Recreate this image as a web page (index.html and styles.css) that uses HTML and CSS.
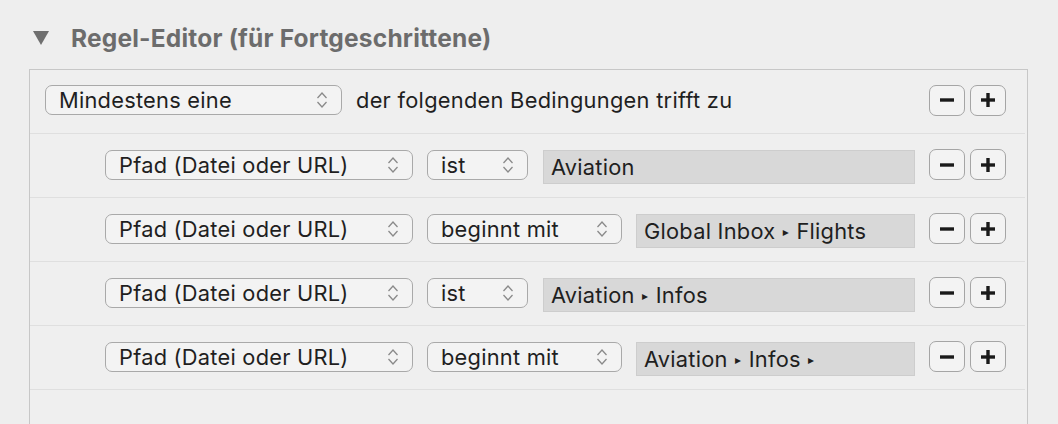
FILE: index.html
```html
<!DOCTYPE html>
<html lang="de">
<head>
<meta charset="utf-8">
<title>Regel-Editor</title>
<link rel="stylesheet" href="styles.css">
</head>
<body>
<div class="section-head">
  <svg class="disclosure" width="16" height="15" viewBox="0 0 16 15"><polygon points="0,1 16,1 8,15" fill="#6f6f6f"/></svg>
  <span class="section-title">Regel-Editor (für Fortgeschrittene)</span>
</div>
<div class="editor">
  <div class="row row-top">
    <div class="popup w-any"><span>Mindestens eine</span><svg class="chev" width="12" height="18" viewBox="0 0 12 18"><polyline points="1.5,7 6,2 10.5,7" /><polyline points="1.5,11 6,16 10.5,11" /></svg></div>
    <span class="label">der folgenden Bedingungen trifft zu</span>
    <div class="spacer"></div>
    <div class="btns"><button class="pm"><svg width="16" height="16" viewBox="0 0 16 16"><rect x="1" y="6.3" width="14" height="3.4"/></svg></button><button class="pm"><svg width="16" height="16" viewBox="0 0 16 16"><rect x="1" y="6.3" width="14" height="3.4"/><rect x="6.3" y="1" width="3.4" height="14"/></svg></button></div>
  </div>
  <div class="row row-sub">
    <div class="popup w-key"><span>Pfad (Datei oder URL)</span><svg class="chev" width="12" height="18" viewBox="0 0 12 18"><polyline points="1.5,7 6,2 10.5,7" /><polyline points="1.5,11 6,16 10.5,11" /></svg></div>
    <div class="popup w-is"><span>ist</span><svg class="chev" width="12" height="18" viewBox="0 0 12 18"><polyline points="1.5,7 6,2 10.5,7" /><polyline points="1.5,11 6,16 10.5,11" /></svg></div>
    <div class="field">Aviation</div>
    <div class="btns"><button class="pm"><svg width="16" height="16" viewBox="0 0 16 16"><rect x="1" y="6.3" width="14" height="3.4"/></svg></button><button class="pm"><svg width="16" height="16" viewBox="0 0 16 16"><rect x="1" y="6.3" width="14" height="3.4"/><rect x="6.3" y="1" width="3.4" height="14"/></svg></button></div>
  </div>
  <div class="row row-sub">
    <div class="popup w-key"><span>Pfad (Datei oder URL)</span><svg class="chev" width="12" height="18" viewBox="0 0 12 18"><polyline points="1.5,7 6,2 10.5,7" /><polyline points="1.5,11 6,16 10.5,11" /></svg></div>
    <div class="popup w-begins"><span>beginnt mit</span><svg class="chev" width="12" height="18" viewBox="0 0 12 18"><polyline points="1.5,7 6,2 10.5,7" /><polyline points="1.5,11 6,16 10.5,11" /></svg></div>
    <div class="field">Global Inbox <span class="tri">▸</span> Flights</div>
    <div class="btns"><button class="pm"><svg width="16" height="16" viewBox="0 0 16 16"><rect x="1" y="6.3" width="14" height="3.4"/></svg></button><button class="pm"><svg width="16" height="16" viewBox="0 0 16 16"><rect x="1" y="6.3" width="14" height="3.4"/><rect x="6.3" y="1" width="3.4" height="14"/></svg></button></div>
  </div>
  <div class="row row-sub">
    <div class="popup w-key"><span>Pfad (Datei oder URL)</span><svg class="chev" width="12" height="18" viewBox="0 0 12 18"><polyline points="1.5,7 6,2 10.5,7" /><polyline points="1.5,11 6,16 10.5,11" /></svg></div>
    <div class="popup w-is"><span>ist</span><svg class="chev" width="12" height="18" viewBox="0 0 12 18"><polyline points="1.5,7 6,2 10.5,7" /><polyline points="1.5,11 6,16 10.5,11" /></svg></div>
    <div class="field">Aviation <span class="tri">▸</span> Infos</div>
    <div class="btns"><button class="pm"><svg width="16" height="16" viewBox="0 0 16 16"><rect x="1" y="6.3" width="14" height="3.4"/></svg></button><button class="pm"><svg width="16" height="16" viewBox="0 0 16 16"><rect x="1" y="6.3" width="14" height="3.4"/><rect x="6.3" y="1" width="3.4" height="14"/></svg></button></div>
  </div>
  <div class="row row-sub">
    <div class="popup w-key"><span>Pfad (Datei oder URL)</span><svg class="chev" width="12" height="18" viewBox="0 0 12 18"><polyline points="1.5,7 6,2 10.5,7" /><polyline points="1.5,11 6,16 10.5,11" /></svg></div>
    <div class="popup w-begins"><span>beginnt mit</span><svg class="chev" width="12" height="18" viewBox="0 0 12 18"><polyline points="1.5,7 6,2 10.5,7" /><polyline points="1.5,11 6,16 10.5,11" /></svg></div>
    <div class="field">Aviation <span class="tri">▸</span> Infos <span class="tri">▸</span></div>
    <div class="btns"><button class="pm"><svg width="16" height="16" viewBox="0 0 16 16"><rect x="1" y="6.3" width="14" height="3.4"/></svg></button><button class="pm"><svg width="16" height="16" viewBox="0 0 16 16"><rect x="1" y="6.3" width="14" height="3.4"/><rect x="6.3" y="1" width="3.4" height="14"/></svg></button></div>
  </div>
</div>
</body>
</html>
```
FILE: styles.css
```css
html, body {
  margin: 0;
  padding: 0;
  background: #eeeeee;
  height: 424px;
  overflow: hidden;
}
body {
  font-family: Inter, "Noto Sans", "Liberation Sans", sans-serif;
  color: #1f1f1f;
}
.section-head {
  display: flex;
  align-items: center;
  height: 69px;
  padding-left: 33px;
  padding-top: 6px;
  box-sizing: border-box;
}
.disclosure {
  display: block;
  margin-right: 22px;
}
.section-title {
  font-size: 24.5px;
  font-weight: 700;
  color: #6c6c6c;
  letter-spacing: 0.2px;
}
.editor {
  margin-left: 29px;
  width: 999px;
  box-sizing: border-box;
  border: 1px solid #c7c7c7;
  border-bottom: none;
  background: #efefef;
  height: 355px;
}
.row {
  display: flex;
  align-items: center;
  height: 64px;
  box-sizing: border-box;
  border-bottom: 1px solid #dfdfdf;
  padding-right: 19px;
  margin: 0 2px 0 0;
}
.row-top {
  padding-left: 15px;
  padding-bottom: 3px;
}
.row-sub {
  padding-left: 75px;
  padding-bottom: 2px;
}
.popup {
  display: flex;
  align-items: center;
  justify-content: space-between;
  height: 30px;
  box-sizing: border-box;
  border: 1px solid #a9a9a9;
  border-radius: 7px;
  background: #f3f3f3;
  padding: 0 13px 0 13px;
  font-size: 21.8px;
  letter-spacing: 0.25px;
  flex: none;
  margin-right: 14px;
}
.popup span {
  white-space: nowrap;
}
.chev {
  display: block;
  fill: none;
  stroke: #8a8a8a;
  stroke-width: 1.3;
}
.w-any { width: 297px; }
.w-key { width: 308px; }
.w-is { width: 101px; margin-right: 15px; }
.w-begins { width: 195px; }
.label {
  font-size: 21.8px;
  letter-spacing: 0.28px;
  white-space: nowrap;
}
.spacer { flex: 1; }
.field {
  flex: 1;
  height: 34px;
  box-sizing: border-box;
  margin-top: 4px;
  background: #d8d8d8;
  border: 1px solid #cdcdcd;
  padding: 3px 0 0 7px;
  font-size: 21.8px;
  letter-spacing: 0.25px;
  margin-right: 14px;
  white-space: nowrap;
}
.tri {
  font-family: "DejaVu Sans", sans-serif;
  font-size: 12px;
  vertical-align: 3px;
  margin: 0 1px;
}
.btns {
  display: flex;
  gap: 5px;
  flex: none;
}
.pm {
  width: 36px;
  height: 31px;
  box-sizing: border-box;
  border: 1px solid #a5a5a5;
  border-radius: 7px;
  background: #f3f3f3;
  padding: 0;
  display: flex;
  align-items: center;
  justify-content: center;
}
.pm svg {
  display: block;
  fill: #1a1a1a;
}
```
